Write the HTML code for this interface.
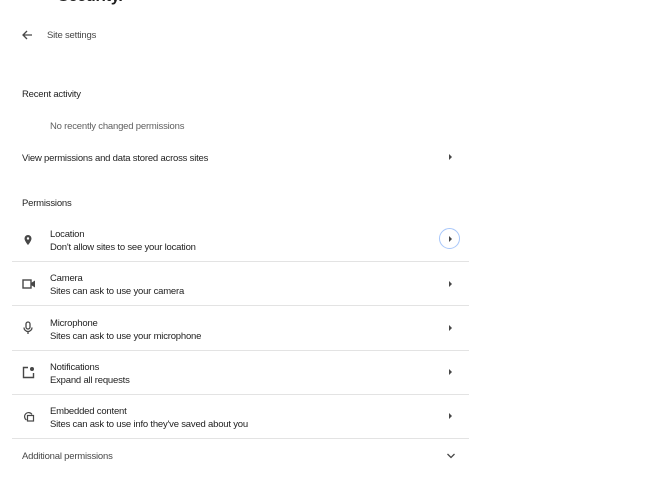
<!DOCTYPE html>
<html><head><style>
body{margin:0;width:658px;height:479px;background:#fff;font-family:"Liberation Sans",sans-serif;color:#1f1f1f;position:relative;overflow:hidden;font-size:9.5px;letter-spacing:-0.2px}
.a{position:absolute;white-space:nowrap}
.sep{position:absolute;left:12px;width:457px;height:1px;background:#e3e3e3}
.arr{position:absolute;left:449px;width:0;height:0;border-top:3px solid transparent;border-bottom:3px solid transparent;border-left:3.5px solid #474747}
.ic{position:absolute;left:22px}
.t{position:absolute;left:50px;line-height:13px}
</style></head><body>
<div class="a" style="left:58px;top:-12px;font-size:16px;font-weight:bold">Security.</div>
<svg class="a" style="left:21px;top:29px" width="12" height="12" viewBox="0 0 12 12"><path d="M11 6H2M6 2L2 6l4 4" stroke="#474747" stroke-width="1.3" fill="none"/></svg>
<div class="a" style="left:47px;top:30px;color:#474747">Site settings</div>
<div class="a" style="left:22px;top:89px;font-weight:500">Recent activity</div>
<div class="a" style="left:50px;top:121px;color:#5f5f5f">No recently changed permissions</div>
<div class="a" style="left:22px;top:153px">View permissions and data stored across sites</div>
<div class="arr" style="top:154px"></div>
<div class="a" style="left:22px;top:198px">Permissions</div>

<svg class="ic" style="top:234px" width="12" height="12" viewBox="0 0 12 12"><path d="M6 1a3.5 3.5 0 0 0-3.5 3.5C2.5 7 6 11 6 11s3.5-4 3.5-6.5A3.5 3.5 0 0 0 6 1z" fill="#474747"/><circle cx="6" cy="4.5" r="1.2" fill="#fff"/></svg>
<div class="t" style="top:228px">Location<br>Don't allow sites to see your location</div>
<div class="a" style="left:439px;top:228px;width:21px;height:21px;border:1.5px solid #a8c7fa;border-radius:50%;box-sizing:border-box"></div>
<div class="arr" style="top:236px"></div>
<div class="sep" style="top:261px"></div>

<svg class="ic" style="top:278px" width="14" height="12" viewBox="0 0 14 12"><rect x="1" y="2" width="8" height="8" fill="none" stroke="#474747" stroke-width="1.4"/><path d="M9 5l4-2.5v7L9 7z" fill="#474747"/></svg>
<div class="t" style="top:272px">Camera<br>Sites can ask to use your camera</div>
<div class="arr" style="top:281px"></div>
<div class="sep" style="top:305px"></div>

<svg class="ic" style="top:321px" width="12" height="14" viewBox="0 0 12 14"><rect x="4" y="1" width="4" height="7" rx="2" fill="none" stroke="#474747" stroke-width="1.3"/><path d="M2 6.5a4 4 0 0 0 8 0M6 10.5V13" stroke="#474747" stroke-width="1.3" fill="none"/></svg>
<div class="t" style="top:317px">Microphone<br>Sites can ask to use your microphone</div>
<div class="arr" style="top:325px"></div>
<div class="sep" style="top:350px"></div>

<svg class="ic" style="top:366px" width="13" height="13" viewBox="0 0 13 13"><path d="M6 1.5H1.5v10h10V7" stroke="#474747" stroke-width="1.4" fill="none"/><circle cx="10" cy="3" r="2" fill="#474747"/></svg>
<div class="t" style="top:361px">Notifications<br>Expand all requests</div>
<div class="arr" style="top:369px"></div>
<div class="sep" style="top:394px"></div>

<svg class="ic" style="top:410px" width="13" height="13" viewBox="0 0 13 13"><path d="M4.5 10A4 4 0 1 1 10 4.5" stroke="#474747" stroke-width="1.2" fill="none"/><rect x="5.5" y="5.5" width="6" height="5.5" fill="none" stroke="#474747" stroke-width="1.2"/></svg>
<div class="t" style="top:405px">Embedded content<br>Sites can ask to use info they've saved about you</div>
<div class="arr" style="top:413px"></div>
<div class="sep" style="top:438px"></div>

<div class="a" style="left:22px;top:451px;color:#474747">Additional permissions</div>
<svg class="a" style="left:446px;top:452px" width="10" height="8" viewBox="0 0 10 8"><path d="M1.5 2l3.5 3.5L8.5 2" stroke="#474747" stroke-width="1.3" fill="none"/></svg>
</body></html>
